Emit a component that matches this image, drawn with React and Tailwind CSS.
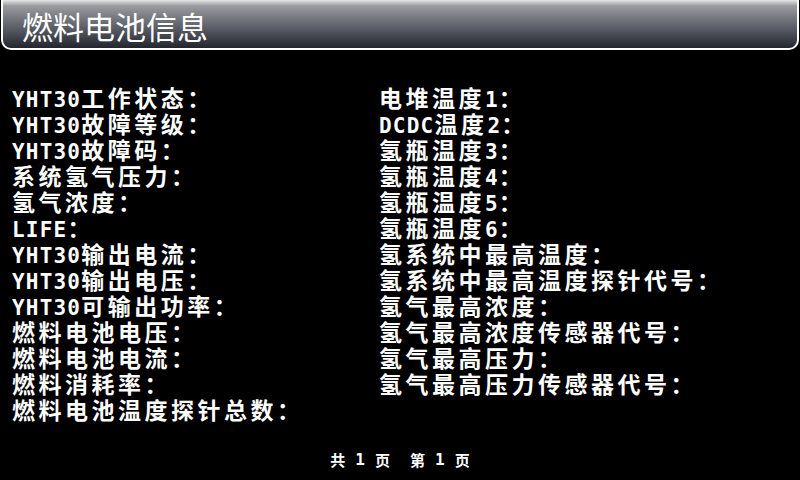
const leftRows = [
  "YHT30工作状态：",
  "YHT30故障等级：",
  "YHT30故障码：",
  "系统氢气压力：",
  "氢气浓度：",
  "LIFE：",
  "YHT30输出电流：",
  "YHT30输出电压：",
  "YHT30可输出功率：",
  "燃料电池电压：",
  "燃料电池电流：",
  "燃料消耗率：",
  "燃料电池温度探针总数：",
];

const rightRows = [
  "电堆温度1：",
  "DCDC温度2：",
  "氢瓶温度3：",
  "氢瓶温度4：",
  "氢瓶温度5：",
  "氢瓶温度6：",
  "氢系统中最高温度：",
  "氢系统中最高温度探针代号：",
  "氢气最高浓度：",
  "氢气最高浓度传感器代号：",
  "氢气最高压力：",
  "氢气最高压力传感器代号：",
];

const cjk = { fontFamily: '"Noto Sans CJK SC", "Liberation Sans", sans-serif' };
const mono = { fontFamily: '"DejaVu Sans Mono", "Noto Sans CJK SC", monospace' };

// half-width latin runs use a mono face like the panel font, CJK uses Noto
function Label({ text }) {
  const parts = text.match(/[A-Za-z0-9]+|[^A-Za-z0-9]+/g);
  return (
    <div className="h-[26px] leading-[26px] flex items-baseline whitespace-nowrap">
      {parts.map((p, i) =>
        /[A-Za-z0-9]/.test(p) ? (
          <span key={i} className="text-[21px] leading-[26px] tracking-[1.2px] font-bold" style={mono}>
            {p}
          </span>
        ) : (
          <span key={i} className="text-[23px] leading-[26px] tracking-[3.5px] font-bold" style={cjk}>
            {p}
          </span>
        )
      )}
    </div>
  );
}

export default function App() {
  return (
    <div
      className="w-[800px] h-[480px] bg-black text-white flex flex-col overflow-hidden"
      style={cjk}
    >
      {/* title bar */}
      <div className="h-[50px] mx-[1px] border-x-2 border-b-2 border-white rounded-b-[10px] bg-[linear-gradient(to_bottom,#e6e6e6_0%,#9a9ca0_12%,#7a7c82_35%,#4b4e56_70%,#22252d_100%)] flex items-center pl-[19px] pt-[2px]">
        <span className="text-[31px] leading-none text-white">燃料电池信息</span>
      </div>

      {/* info rows */}
      <div className="flex-1 flex pt-[34px]">
        <div className="w-[379px] pl-[12px] flex flex-col">
          {leftRows.map((t) => (
            <Label key={t} text={t} />
          ))}
        </div>
        <div className="flex-1 flex flex-col">
          {rightRows.map((t) => (
            <Label key={t} text={t} />
          ))}
        </div>
      </div>

      {/* paging */}
      <div className="h-[40px] flex items-center justify-center gap-[20px] font-bold">
        <div className="flex items-center gap-[10px]">
          <span className="text-[15px]">共</span>
          <span className="text-[16px]" style={mono}>1</span>
          <span className="text-[15px]">页</span>
        </div>
        <div className="flex items-center gap-[10px]">
          <span className="text-[15px]">第</span>
          <span className="text-[16px]" style={mono}>1</span>
          <span className="text-[15px]">页</span>
        </div>
      </div>
    </div>
  );
}
